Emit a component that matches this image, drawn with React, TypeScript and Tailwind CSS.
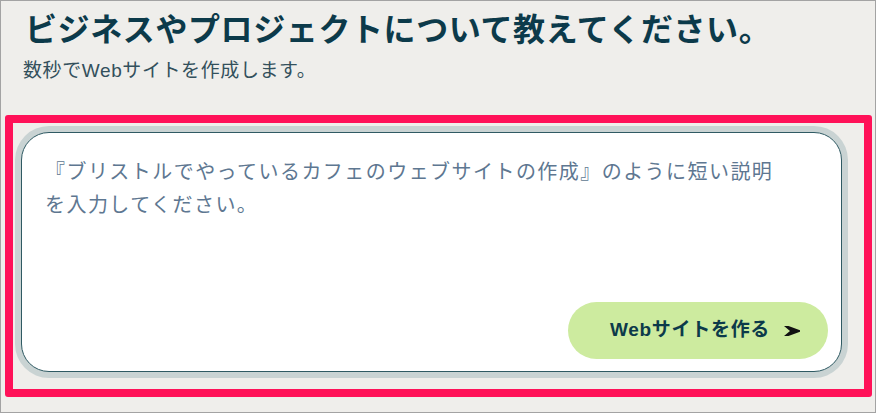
import { useState } from "react";

const jp = { fontFamily: '"Liberation Sans", "Noto Sans CJK JP", sans-serif' };

function SendArrow() {
  return (
    <svg width="16" height="10" viewBox="0 0 16 10" className="ml-[14px] mt-[1px]">
      <polygon points="0,0 4.5,0 16,4.3 16,5.7 4.5,10 0,10 6,5" fill="#111" />
    </svg>
  );
}

export default function App() {
  const [text, setText] = useState("");

  return (
    <div
      className="w-[876px] h-[413px] border border-[#a3a3a3] bg-[#efeeeb] overflow-hidden"
      style={jp}
    >
      <div className="pl-[24px] pt-[9px]">
        <h1 className="text-[32px] leading-[40px] font-bold text-[#0c3a4a] tracking-[0.6px]">
          ビジネスやプロジェクトについて教えてください。
        </h1>
        <p className="mt-[9px] text-[19px] leading-[24px] text-[#33505c] tracking-[0.6px] -ml-[2px]">
          数秒でWebサイトを作成します。
        </p>
      </div>

      <div className="mt-[32px] ml-[4px] w-[867px] h-[282px] border-[8px] border-[#ff1158] rounded-[3px] pl-[8px] pt-[9px]">
        <div className="relative w-[821px] h-[240px] rounded-[28px] border border-[#2f5a63] bg-white shadow-[0_0_0_6px_#c9d3d3]">
          <textarea
            value={text}
            onChange={(e) => setText(e.target.value)}
            placeholder="『ブリストルでやっているカフェのウェブサイトの作成』のように短い説明を入力してください。"
            className="w-[735px] h-[150px] ml-[23px] mt-[21px] resize-none outline-none bg-transparent text-[20px] leading-[33px] tracking-[1.45px] text-[#0c3a4a] placeholder:text-[#5e7791]"
            style={{ fontFamily: '"Noto Sans CJK JP", sans-serif' }}
          />
          <button className="absolute right-[13px] bottom-[12px] w-[260px] h-[57px] rounded-full bg-[#cdeb9f] flex items-center pl-[42px] text-[19px] font-bold text-[#0c3a4a] tracking-[0.7px]">
            Webサイトを作る
            <SendArrow />
          </button>
        </div>
      </div>
    </div>
  );
}
